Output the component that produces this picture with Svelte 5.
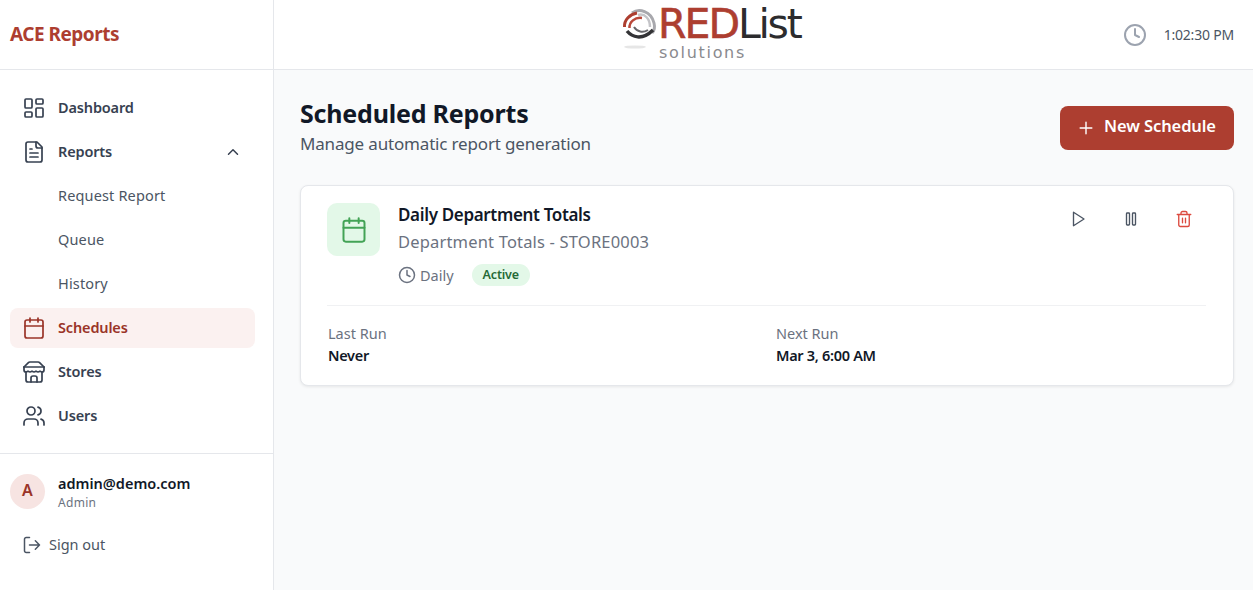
<script>
  const blocks = [
    { label: 'Last Run', value: 'Never' },
    { label: 'Next Run', value: 'Mar 3, 6:00 AM' }
  ];
</script>

<div class="shell">
  <aside class="sidebar">
    <div class="brand"><span>ACE Reports</span></div>
    <nav class="nav">
      <div class="item">
        <svg class="ic" viewBox="0 0 24 24"><rect x="3" y="3" width="7" height="9" rx="1"/><rect x="14" y="3" width="7" height="5" rx="1"/><rect x="14" y="12" width="7" height="9" rx="1"/><rect x="3" y="16" width="7" height="5" rx="1"/></svg>
        <span class="lbl">Dashboard</span>
      </div>
      <div class="item">
        <svg class="ic" viewBox="0 0 24 24"><path d="M15 2H6a2 2 0 0 0-2 2v16a2 2 0 0 0 2 2h12a2 2 0 0 0 2-2V7Z"/><path d="M14 2v4a2 2 0 0 0 2 2h4"/><path d="M10 9H8M16 13H8M16 17H8"/></svg>
        <span class="lbl grow">Reports</span>
        <svg class="chev" viewBox="0 0 24 24"><path d="m6 15 6-6 6 6"/></svg>
      </div>
      <div class="item sub"><span class="lbl">Request Report</span></div>
      <div class="item sub"><span class="lbl">Queue</span></div>
      <div class="item sub"><span class="lbl">History</span></div>
      <div class="item active">
        <svg class="ic" viewBox="0 0 24 24"><path d="M8 2v4M16 2v4"/><rect x="3" y="4" width="18" height="18" rx="2"/><path d="M3 10h18"/></svg>
        <span class="lbl">Schedules</span>
      </div>
      <div class="item">
        <svg class="ic" viewBox="0 0 24 24"><path d="m2 7 4.410-4.410A2 2 0 0 1 7.830 2h8.340a2 2 0 0 1 1.420.590L22 7"/><path d="M4 12v8a2 2 0 0 0 2 2h12a2 2 0 0 0 2-2v-8"/><path d="M15 22v-4a2 2 0 0 0-2-2h-2a2 2 0 0 0-2 2v4"/><path d="M2 7h20"/><path d="M22 7v3a2 2 0 0 1-2 2a2.700 2.700 0 0 1-1.590-.630.700.700 0 0 0-.820 0A2.700 2.700 0 0 1 16 12a2.700 2.700 0 0 1-1.590-.630.700.700 0 0 0-.820 0A2.700 2.700 0 0 1 12 12a2.700 2.700 0 0 1-1.590-.630.700.700 0 0 0-.820 0A2.700 2.700 0 0 1 8 12a2.700 2.700 0 0 1-1.590-.630.700.700 0 0 0-.820 0A2.700 2.700 0 0 1 4 12a2 2 0 0 1-2-2V7"/></svg>
        <span class="lbl">Stores</span>
      </div>
      <div class="item">
        <svg class="ic" viewBox="0 0 24 24"><path d="M16 21v-2a4 4 0 0 0-4-4H6a4 4 0 0 0-4 4v2"/><circle cx="9" cy="7" r="4"/><path d="M22 21v-2a4 4 0 0 0-3-3.870"/><path d="M16 3.130a4 4 0 0 1 0 7.750"/></svg>
        <span class="lbl">Users</span>
      </div>
    </nav>
    <div class="foot">
      <div class="user">
        <div class="avatar"><span>A</span></div>
        <div class="who">
          <div class="mail">admin@demo.com</div>
          <div class="role">Admin</div>
        </div>
      </div>
      <div class="signout">
        <svg class="ic-s" viewBox="0 0 24 24"><path d="M9 21H5a2 2 0 0 1-2-2V5a2 2 0 0 1 2-2h4"/><path d="m16 17 5-5-5-5M21 12H9"/></svg>
        <span class="lbl">Sign out</span>
      </div>
    </div>
  </aside>

  <div class="right">
    <header class="top">
      <div class="logo">
        <svg class="swirl" viewBox="0 0 36 48">
          <ellipse cx="13" cy="41" rx="11" ry="1.600" fill="#e6e6e6" stroke="none"/>
          <path d="M10 7C17 2 29 5 32 17c1 4 0 8-2 10" stroke="#a8a8ad" stroke-width="3"/>
          <path d="M16 9c7-2 12 4 12 12" stroke="#c4c4c8" stroke-width="2.500"/>
          <path d="M2.500 21C2 14 8 8 15 7" stroke="#ad3e30" stroke-width="3"/>
          <path d="M7.500 22C7 16 13 11 20 12" stroke="#b9483a" stroke-width="2.500"/>
          <path d="M5 25c5 6 15 10 26-1" stroke="#333336" stroke-width="3.500"/>
          <path d="M12 21c3 5 9 6 14 3" stroke="#66666a" stroke-width="2"/>
        </svg>
        <div class="wordmark">
          <div class="lname"><span class="red">RED</span><span class="dark">List</span></div>
          <div class="lsub">solutions</div>
        </div>
      </div>
      <div class="clock">
        <svg class="clock-ic" viewBox="0 0 24 24"><circle cx="12" cy="12" r="10"/><path d="M12 6v6l4 2"/></svg>
        <span>1:02:30 PM</span>
      </div>
    </header>

    <main class="main">
      <div class="head">
        <div>
          <h1>Scheduled Reports</h1>
          <p>Manage automatic report generation</p>
        </div>
        <button class="new">
          <svg class="plus" viewBox="0 0 24 24"><path d="M5 12h14M12 5v14"/></svg>
          <span>New Schedule</span>
        </button>
      </div>

      <section class="card">
        <div class="row">
          <div class="tile">
            <svg viewBox="0 0 24 24"><path d="M8 2v4M16 2v4"/><rect x="3" y="4" width="18" height="18" rx="2"/><path d="M3 10h18"/></svg>
          </div>
          <div class="info">
            <div class="title">Daily Department Totals</div>
            <div class="desc">Department Totals - STORE0003</div>
            <div class="meta">
              <svg class="meta-ic" viewBox="0 0 24 24"><circle cx="12" cy="12" r="10"/><path d="M12 6v6l4 2"/></svg>
              <span class="freq">Daily</span>
              <span class="badge">Active</span>
            </div>
          </div>
          <div class="actions">
            <svg class="act" viewBox="0 0 24 24"><path d="M6 3 20 12 6 21z"/></svg>
            <svg class="act" viewBox="0 0 24 24"><rect x="6" y="4" width="4" height="16" rx="1"/><rect x="14" y="4" width="4" height="16" rx="1"/></svg>
            <svg class="act del" viewBox="0 0 24 24"><path d="M3 6h18M19 6v14c0 1-1 2-2 2H7c-1 0-2-1-2-2V6M8 6V4c0-1 1-2 2-2h4c1 0 2 1 2 2v2M10 11v6M14 11v6"/></svg>
          </div>
        </div>
        <div class="stats">
          {#each blocks as b}
            <div>
              <div class="k">{b.label}</div>
              <div class="v">{b.value}</div>
            </div>
          {/each}
        </div>
      </section>
    </main>
  </div>
</div>

<style>
  :global(body) { margin: 0; font-family: "Noto Sans", "Open Sans", sans-serif; }
  * { box-sizing: border-box; }
  svg { fill: none; stroke: currentColor; stroke-width: 2; stroke-linecap: round; stroke-linejoin: round; flex: none; display: block; }
  .shell { display: flex; height: 590px; overflow: hidden; background: #f9fafb; }
  .sidebar { width: 274px; flex: none; background: #fff; border-right: 1px solid #e5e7eb; display: flex; flex-direction: column; }
  .brand { height: 70px; border-bottom: 1px solid #e5e7eb; padding: 0 10px 2px; display: flex; align-items: center; font-size: 19px; font-weight: 700; color: #ad3e30; letter-spacing: -0.5px; }
  .nav { padding: 18px 18px 0 10px; display: flex; flex-direction: column; gap: 4px; flex: 1; }
  .item { height: 40px; border-radius: 8px; display: flex; align-items: center; padding: 0 12px; gap: 12px; font-size: 14.500px; font-weight: 600; color: #374151; letter-spacing: -0.15px; }
  .lbl { padding-bottom: 3px; }
  .grow { flex: 1; }
  .ic { width: 24px; height: 24px; stroke-width: 1.700; }
  .chev { width: 18px; height: 18px; margin-right: 1px; }
  .sub { padding-left: 48px; font-weight: 400; color: #4b5563; letter-spacing: 0.15px; }
  .active { background: #fbf1f0; color: #9a3428; }
  .foot { border-top: 1px solid #e5e7eb; height: 137px; padding: 20px 10px 0; }
  .user { display: flex; align-items: flex-start; gap: 13px; }
  .avatar { width: 35px; height: 35px; border-radius: 50%; background: #f7e4e2; color: #9a3428; display: flex; align-items: center; justify-content: center; font-size: 16px; font-weight: 600; padding-bottom: 3px; }
  .mail { font-size: 14.500px; font-weight: 600; color: #111827; line-height: 20px; letter-spacing: 0; margin-top: -1px; }
  .role { font-size: 12px; color: #6b7280; line-height: 16px; letter-spacing: 0.3px; margin-top: 2px; }
  .signout { display: flex; align-items: center; gap: 7px; padding-left: 12px; margin-top: 16px; height: 36px; font-size: 14.500px; color: #4b5563; letter-spacing: 0; }
  .ic-s { width: 20px; height: 20px; stroke-width: 1.800; }
  .right { flex: 1; min-width: 0; display: flex; flex-direction: column; }
  .top { height: 70px; background: #fff; border-bottom: 1px solid #e5e7eb; display: flex; align-items: center; justify-content: flex-end; padding-right: 19px; position: relative; }
  .logo { position: absolute; left: 348px; top: 6px; display: flex; gap: 1px; }
  .swirl { width: 36px; height: 48px; stroke-linecap: butt; }
  .wordmark { display: flex; flex-direction: column; margin-left: -1px; }
  .lname { font-family: "DejaVu Sans", sans-serif; font-size: 41px; line-height: 36px; height: 36px; letter-spacing: -2px; white-space: nowrap; }
  .lname span { display: inline-block; line-height: 36px; }
  .red { color: #ad3e30; -webkit-text-stroke: 0.6px #ad3e30; }
  .dark { color: #2c2c2e; letter-spacing: -2.300px; }
  .lsub { font-family: "DejaVu Sans", sans-serif; font-size: 16px; line-height: 14px; color: #8a8a8e; padding-left: 1px; letter-spacing: 1.700px; margin-top: 4px; }
  .clock { display: flex; align-items: center; gap: 17px; font-size: 14px; color: #4b5563; letter-spacing: -0.2px; }
  .clock-ic { width: 24px; height: 24px; color: #9ca3af; }
  .main { flex: 1; padding: 36px 19px 0 26px; }
  .head { display: flex; justify-content: space-between; margin-bottom: 35px; }
  h1 { margin: -9px 0 0; font-size: 25px; font-weight: 700; line-height: 32px; color: #111827; letter-spacing: -0.2px; }
  p { margin: 2px 0 0; font-size: 17px; line-height: 26px; color: #4b5563; letter-spacing: -0.17px; }
  .new { height: 44px; width: 174px; border: 0; border-radius: 8px; background: #ad3e30; color: #fff; display: flex; align-items: center; justify-content: flex-start; gap: 8px; font: 600 16.500px "Noto Sans", sans-serif; letter-spacing: -0.1px; padding: 0 0 0 16px; }
  .new span { padding-bottom: 6px; }
  .plus { width: 20px; height: 20px; stroke-width: 1.700; }
  .card { height: 201px; background: #fff; border: 1px solid #e5e7eb; border-radius: 8px; box-shadow: 0 1px 3px rgba(0,0,0,.08); padding: 17px 27px 0 26px; margin-top: -7px; }
  .row { display: flex; height: 103px; border-bottom: 1px solid #f0f1f3; }
  .tile { width: 53px; height: 53px; border-radius: 10px; background: #e3f8e8; color: #43a356; display: flex; align-items: center; justify-content: center; margin-right: 18px; }
  .tile svg { width: 28px; height: 28px; stroke-width: 1.700; }
  .info { flex: 1; }
  .title { font-size: 17px; font-weight: 600; line-height: 24px; color: #111827; letter-spacing: -0.34px; }
  .desc { font-size: 16.500px; line-height: 24px; margin-top: 3px; color: #6b7280; letter-spacing: 0.18px; }
  .meta { display: flex; align-items: center; margin-top: 10px; height: 22px; color: #6b7280; font-size: 14.500px; }
  .meta-ic { width: 18px; height: 18px; stroke-width: 2; margin-right: 4px; }
  .freq { margin-right: 18px; letter-spacing: 0; padding-bottom: 1px; }
  .badge { background: #e3f8e8; color: #256a36; font-size: 12.500px; font-weight: 600; height: 22px; padding: 0 11px 1px; border-radius: 11px; display: flex; align-items: center; letter-spacing: -0.2px; }
  .actions { display: flex; gap: 35px; padding: 7px 13px 0 0; color: #4b5563; height: max-content; }
  .act { width: 18px; height: 18px; stroke-width: 1.800; }
  .del { color: #dc4a3f; }
  .stats { display: grid; grid-template-columns: 1fr 1fr; gap: 19px; padding-top: 17px; }
  .stats > div:first-child { padding-left: 1px; }
  .k { font-size: 14.500px; line-height: 20px; color: #6b7280; letter-spacing: 0; }
  .v { font-size: 14.500px; font-weight: 600; line-height: 20px; margin-top: 2px; color: #111827; letter-spacing: -0.3px; }
</style>
